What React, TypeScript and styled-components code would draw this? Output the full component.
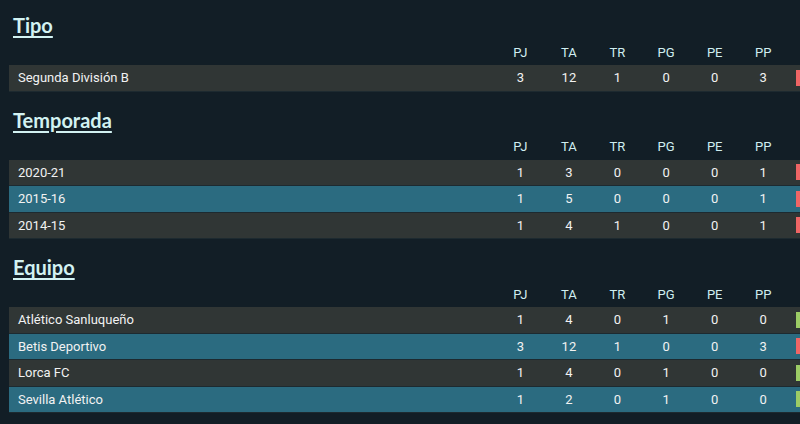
import React from "react"
import styled, { createGlobalStyle } from "styled-components"

const GlobalStyle = createGlobalStyle`
  html, body {
    margin: 0;
    padding: 0;
    background: #121e26;
    overflow: hidden;
  }
`

const Page = styled.div`
  width: 820px;
  padding: 12px 0 0 9px;
  font-family: Roboto, "Liberation Sans", sans-serif;
`

const Section = styled.section`
  margin-bottom: 15px;
`

const Title = styled.h2`
  margin: 0 0 0 4px;
  font-family: Lato, "Liberation Sans", sans-serif;
  font-size: 20px;
  font-weight: 700;
  line-height: 26px;
  color: #d2f2f2;
  text-decoration: underline;
  text-decoration-thickness: 2px;
  text-underline-offset: 3px;
`

const Grid = styled.div<{ $bg?: string }>`
  display: grid;
  grid-template-columns: 487px repeat(6, 48.6px) 1fr;
  align-items: center;
  background: ${({ $bg }) => $bg || "transparent"};
`

const HeadRow = styled(Grid)`
  height: 26px;
  margin-top: 1px;
  color: #d0eef0;
  font-size: 13px;
`

const Row = styled(Grid)`
  box-sizing: border-box;
  height: 26.5px;
  border-bottom: 1px solid #1d2a30;
  color: #f2f2f2;
  font-size: 13px;
`

const Name = styled.div`
  padding-left: 9px;
`

const Num = styled.div`
  text-align: center;
`

const Mark = styled.div<{ $win: boolean }>`
  width: 8px;
  height: 16px;
  margin-left: 8px;
  background: ${({ $win }) => ($win ? "#9ccc65" : "#ef6565")};
`

type Item = { name: string; v: number[] }

const cols = ["PJ", "TA", "TR", "PG", "PE", "PP"]

const sections: { title: string; rows: Item[] }[] = [
  { title: "Tipo", rows: [{ name: "Segunda División B", v: [3, 12, 1, 0, 0, 3] }] },
  {
    title: "Temporada",
    rows: [
      { name: "2020-21", v: [1, 3, 0, 0, 0, 1] },
      { name: "2015-16", v: [1, 5, 0, 0, 0, 1] },
      { name: "2014-15", v: [1, 4, 1, 0, 0, 1] },
    ],
  },
  {
    title: "Equipo",
    rows: [
      { name: "Atlético Sanluqueño", v: [1, 4, 0, 1, 0, 0] },
      { name: "Betis Deportivo", v: [3, 12, 1, 0, 0, 3] },
      { name: "Lorca FC", v: [1, 4, 0, 1, 0, 0] },
      { name: "Sevilla Atlético", v: [1, 2, 0, 1, 0, 0] },
    ],
  },
]

export default function App() {
  return (
    <>
      <GlobalStyle />
      <Page>
        {sections.map((s) => (
          <Section key={s.title}>
            <Title>{s.title}</Title>
            <HeadRow>
              <div />
              {cols.map((c) => (
                <Num key={c}>{c}</Num>
              ))}
              <div />
            </HeadRow>
            {s.rows.map((r, i) => (
              <Row key={r.name} $bg={i % 2 === 0 ? "#303635" : "#2b6b80"}>
                <Name>{r.name}</Name>
                {r.v.map((n, j) => (
                  <Num key={j}>{n}</Num>
                ))}
                <Mark $win={r.v[3] > 0} />
              </Row>
            ))}
          </Section>
        ))}
      </Page>
    </>
  )
}
